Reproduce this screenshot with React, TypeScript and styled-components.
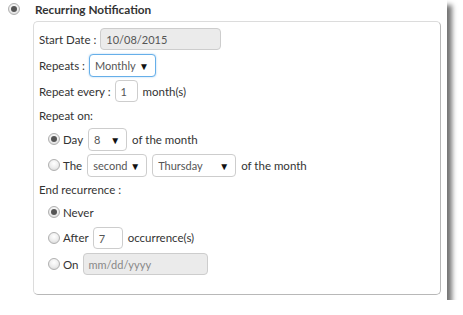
import React from "react";
import styled, { createGlobalStyle } from "styled-components";

const Global = createGlobalStyle`
  html, body { margin: 0; padding: 0; background: #fff; }
  body { font-family: Lato, "Open Sans", sans-serif; color: #333; }
  * { box-sizing: border-box; }
`;

const Frame = styled.div`
  width: 447px;
  height: 300px;
  background: #fff;
  box-shadow: 5px 5px 5px rgba(0, 0, 0, 0.55);
  padding: 2px 0 0 8px;
  display: flex;
  flex-direction: column;
`;

const Header = styled.div`
  display: flex;
  align-items: center;
  height: 14px;
  gap: 12px;
  font-weight: 700;
  font-size: 11.8px;
  color: #333;
`;

const Fieldset = styled.div`
  margin: 5px 0 0 25px;
  width: 408px;
  height: 274px;
  border: 1px solid #dcdcdc;
  border-right-color: #b8b8b8;
  border-bottom-color: #b8b8b8;
  border-radius: 5px;
  padding: 4px 0 0 5px;
  display: flex;
  flex-direction: column;
`;

const Row = styled.div<{ $h: number; $indent?: boolean }>`
  display: flex;
  align-items: center;
  height: ${(p) => p.$h}px;
  padding-left: ${(p) => (p.$indent ? 9 : 0)}px;
  font-size: 11.5px;
  color: #333;
  white-space: nowrap;
`;

const Label = styled.span<{ $gap?: number }>`
  margin-right: ${(p) => p.$gap ?? 4}px;
`;

const Radio = styled.span<{ $checked?: boolean }>`
  width: 12px;
  height: 12px;
  border-radius: 50%;
  border: 1px solid #b0b0b0;
  background: radial-gradient(circle at 50% 35%, #ffffff 0%, #ececec 55%, #cfcfcf 100%);
  display: inline-flex;
  align-items: center;
  justify-content: center;
  margin-right: 3px;
  flex: none;
  &::after {
    content: "";
    width: 6px;
    height: 6px;
    border-radius: 50%;
    background: ${(p) => (p.$checked ? "#555" : "transparent")};
  }
`;

const Input = styled.div<{ $w: number; $disabled?: boolean; $placeholder?: boolean }>`
  width: ${(p) => p.$w}px;
  height: 22px;
  border: 1px solid #cdcdcd;
  border-radius: 4px;
  background: ${(p) => (p.$disabled ? "#ebebeb" : "#fff")};
  font-size: 11px;
  color: ${(p) => (p.$placeholder ? "#888" : "#555")};
  display: flex;
  align-items: center;
  padding: 1px 0 0 5px;
  margin-right: 5px;
`;

const Select = styled.div<{ $w: number; $focus?: boolean }>`
  width: ${(p) => p.$w}px;
  height: 23px;
  border: 1px solid ${(p) => (p.$focus ? "#66afe9" : "#cdcdcd")};
  box-shadow: ${(p) => (p.$focus ? "0 0 2px rgba(102,175,233,0.6)" : "none")};
  border-radius: 4px;
  background: #fff;
  font-size: 11px;
  color: #555;
  display: flex;
  align-items: center;
  justify-content: space-between;
  padding: 1px 6px 0 5px;
  margin-right: 5px;
`;

const Arrow = styled.span`
  font-size: 10px;
  color: #111;
`;

export default function App() {
  return (
    <>
      <Global />
      <Frame>
        <Header>
          <Radio $checked />
          <span>Recurring Notification</span>
        </Header>
        <Fieldset>
          <Row $h={26}>
            <Label>Start Date :</Label>
            <Input $w={121} $disabled>10/08/2015</Input>
          </Row>
          <Row $h={26}>
            <Label>Repeats :</Label>
            <Select $w={67} $focus>
              <span>Monthly</span>
              <Arrow>▼</Arrow>
            </Select>
          </Row>
          <Row $h={26}>
            <Label>Repeat every :</Label>
            <Input $w={23}>1</Input>
            <span>month(s)</span>
          </Row>
          <Row $h={22}>
            <span>Repeat on:</span>
          </Row>
          <Row $h={26} $indent>
            <Radio $checked />
            <Label $gap={5}>Day</Label>
            <Select $w={39}>
              <span>8</span>
              <Arrow>▼</Arrow>
            </Select>
            <span>of the month</span>
          </Row>
          <Row $h={26} $indent>
            <Radio />
            <Label $gap={5}>The</Label>
            <Select $w={60}>
              <span>second</span>
              <Arrow>▼</Arrow>
            </Select>
            <Select $w={84}>
              <span>Thursday</span>
              <Arrow>▼</Arrow>
            </Select>
            <span>of the month</span>
          </Row>
          <Row $h={22}>
            <span>End recurrence :</span>
          </Row>
          <Row $h={24} $indent>
            <Radio $checked />
            <span>Never</span>
          </Row>
          <Row $h={27} $indent>
            <Radio />
            <Label $gap={4}>After</Label>
            <Input $w={30}>7</Input>
            <span>occurrence(s)</span>
          </Row>
          <Row $h={26} $indent>
            <Radio />
            <Label $gap={4}>On</Label>
            <Input $w={125} $disabled $placeholder>mm/dd/yyyy</Input>
          </Row>
        </Fieldset>
      </Frame>
    </>
  );
}
